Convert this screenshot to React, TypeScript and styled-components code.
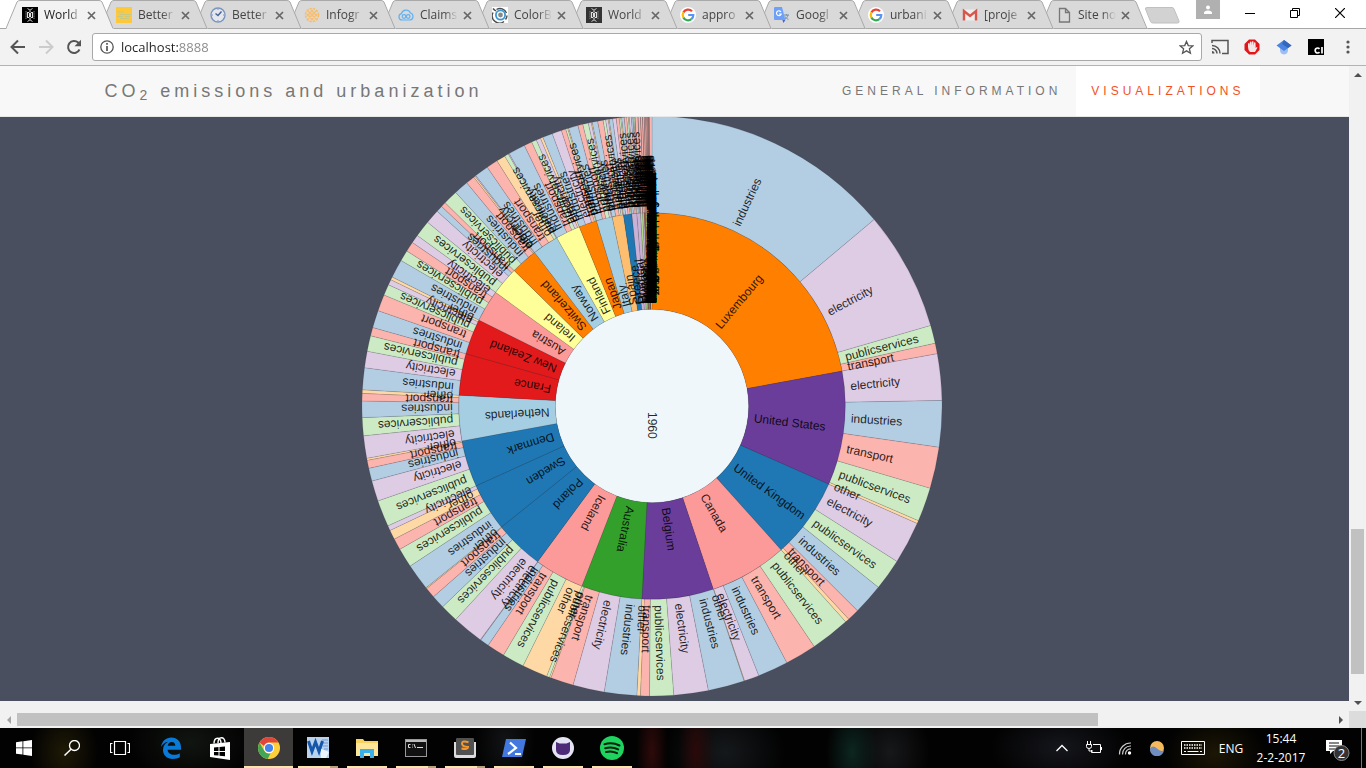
import React from 'react';
import styled, { createGlobalStyle } from 'styled-components';

const GlobalStyle = createGlobalStyle`
  * { box-sizing: border-box; }
  html, body { margin: 0; padding: 0; }
  body { font-family: "Liberation Sans", Arial, sans-serif; overflow: hidden; }
  button { font: inherit; color: inherit; border: 0; padding: 0; background: none; }
  a { text-decoration: none; color: inherit; }
  svg { display: block; flex: none; }
`;

const UI_FONT = '"Open Sans", "Noto Sans", sans-serif';

/* ---------- window frame ---------- */

const Screen = styled.div`
  display: flex;
  flex-direction: column;
  height: 100vh;
  background: #f1f1f1;
`;

const TabStrip = styled.header`
  display: flex;
  flex: none;
  height: 29px;
  padding: 0 4px 0 6px;
  background: linear-gradient(#fff 28px, #a6a6a6 28px);
  font-family: ${UI_FONT};
`;

const TabItem = styled.div<{ $order: number; $active?: boolean }>`
  position: relative;
  z-index: ${(p) => p.$order};
  display: flex;
  flex: none;
  align-items: center;
  width: 94px;
  height: 29px;
  padding: 1px 1px 0 16px;
  color: ${(p) => (p.$active ? '#222' : '#444')};
`;

const TabShape = styled.svg`
  position: absolute;
  left: 0;
  top: 0;
  z-index: -1;
`;

const TabLabel = styled.button`
  display: flex;
  flex: 1;
  align-items: center;
  gap: 6px;
  min-width: 0;
  font-size: 12px;
  line-height: 16px;
`;

const TabTitle = styled.span`
  flex: 1;
  white-space: nowrap;
  text-align: left;
  mask-image: linear-gradient(90deg, #000 24px, transparent 38px);
`;

const TabClose = styled.button`
  display: flex;
  justify-content: center;
  width: 16px;
`;

const NewTab = styled.button`
  margin: 6px 0 0 10px;
  height: 18px;
`;

const WindowControls = styled.div`
  display: flex;
  flex: 1;
  justify-content: flex-end;
`;

const UserBadge = styled.button`
  display: flex;
  justify-content: center;
  align-items: center;
  width: 24px;
  height: 19px;
  margin-right: 7px;
  background: #b0b0b0;
`;

const WindowButton = styled.button`
  display: flex;
  justify-content: center;
  align-items: center;
  width: 45px;
  height: 26px;
`;

const Toolbar = styled.div`
  display: flex;
  flex: none;
  align-items: center;
  height: 37px;
  padding: 0 2px 0 9px;
  background: #f2f2f2;
  border-bottom: 1px solid #b3b3b3;
`;

const ToolButton = styled.button<{ $width?: number }>`
  display: flex;
  flex: none;
  justify-content: center;
  align-items: center;
  width: ${(p) => p.$width ?? 32}px;
  height: 28px;
`;

const AddressBar = styled.div`
  display: flex;
  flex: 1;
  align-items: center;
  height: 28px;
  margin: 0 2px 0 9px;
  padding: 0 7px;
  gap: 7px;
  background: #fff;
  border: 1px solid #a9a9a9;
  border-radius: 3px;
`;

const AddressInput = styled.input`
  flex: 1;
  min-width: 0;
  height: 24px;
  padding: 0;
  border: 0;
  outline: 0;
  font: 13px/24px ${UI_FONT};
  color: transparent;
  background: linear-gradient(90deg, #222 58px, #888 58px);
  background-clip: text;
`;

/* ---------- page ---------- */

const Viewport = styled.div`
  display: grid;
  flex: 1;
  min-height: 0;
  grid-template: minmax(0, 1fr) 17px / minmax(0, 1fr) 17px;
`;

const Page = styled.main`
  display: flex;
  flex-direction: column;
  overflow: hidden;
  padding-bottom: 10px;
  background: #f1f1f1;
`;

const SiteNav = styled.nav`
  flex: none;
  background: #f8f8f8;
  border-bottom: 1px solid #e7e7e7;
`;

const NavInner = styled.div`
  display: flex;
  justify-content: space-between;
  max-width: 1170px;
  margin: 0 auto;
  height: 50px;
  padding-left: 15px;
  letter-spacing: 4px;
  line-height: 20px;
`;

const Brand = styled.a`
  padding: 15px 0;
  font-size: 18px;
  color: #777;
  white-space: nowrap;
  sub { font-size: 14px; line-height: 0; vertical-align: -3px; }
`;

const NavLinks = styled.div`
  display: flex;
`;

const NavLink = styled.a<{ $active?: boolean }>`
  padding: 15px;
  font-size: 12px;
  text-transform: uppercase;
  white-space: nowrap;
  color: ${(p) => (p.$active ? '#f4511e' : '#777')};
  background: ${(p) => (p.$active ? '#fff' : 'transparent')};
`;

const ChartSection = styled.section`
  display: flex;
  flex: 1;
  justify-content: center;
  min-height: 0;
  overflow: hidden;
  padding-right: 45px;
  background: #494f5e;
`;

const SunburstSvg = styled.svg`
  flex: none;
  margin-top: -1px;
  font-size: 12px;
  path { stroke: #000; stroke-opacity: 0.2; stroke-width: 0.5px; }
  text { fill-opacity: 0.85; }
`;

const VerticalBar = styled.div`
  display: flex;
  flex-direction: column;
  align-items: center;
  background: #f1f1f1;
`;

const HorizontalBar = styled.div`
  display: flex;
  align-items: center;
  background: #f1f1f1;
`;

const BarArrow = styled.button`
  display: flex;
  flex: none;
  justify-content: center;
  align-items: center;
  width: 17px;
  height: 17px;
`;

const Track = styled.div<{ $vertical?: boolean }>`
  display: flex;
  flex: 1;
  flex-direction: ${(p) => (p.$vertical ? 'column' : 'row')};
`;

const TrackGap = styled.div<{ $grow: number }>`
  flex: ${(p) => p.$grow} 1 0;
`;

const Thumb = styled.div<{ $grow: number }>`
  flex: ${(p) => p.$grow} 1 0;
  min-width: 13px;
  min-height: 13px;
  background: #c1c1c1;
`;

const Corner = styled.div`
  background: #dcdcdc;
`;

/* ---------- task bar ---------- */

const Taskbar = styled.footer`
  display: flex;
  flex: none;
  justify-content: space-between;
  height: 40px;
  color: #fff;
  font-family: ${UI_FONT};
  background:
    radial-gradient(ellipse 34px 44px at 64px 24px, #1f1a06, transparent),
    radial-gradient(ellipse 60px 40px at 190px 14px, #111510, transparent),
    radial-gradient(ellipse 30px 50px at 505px 14px, #121315, transparent),
    radial-gradient(ellipse 16px 60px at 652px 24px, #2e0a0a, transparent),
    radial-gradient(ellipse 18px 60px at 696px 24px, #2a0909, transparent),
    radial-gradient(ellipse 60px 50px at 725px 24px, #15181b, transparent),
    radial-gradient(ellipse 26px 50px at 852px 24px, #0d2620, transparent),
    radial-gradient(ellipse 40px 50px at 890px 24px, #17181a, transparent),
    radial-gradient(ellipse 70px 40px at 1060px 20px, #15161c, transparent),
    radial-gradient(ellipse 50px 40px at 1215px 26px, #1c1605, transparent),
    #020202;
`;

const AppRow = styled.div`
  display: flex;
`;

const AppButton = styled.button<{ $state?: 'active' | 'open' | 'stacked'; $wide?: boolean }>`
  display: flex;
  justify-content: center;
  align-items: center;
  width: ${(p) => (p.$wide ? 49 : 48)}px;
  height: 40px;
  background: ${(p) => {
    if (p.$state === 'active') return 'linear-gradient(#3d3a3a 38px, #fbe3ab 38px)';
    if (p.$state === 'open') return 'linear-gradient(#fbe3ab, #fbe3ab) 50% 100% / 40px 2px no-repeat';
    if (p.$state === 'stacked')
      return 'linear-gradient(90deg, #fbe3ab 32px, #b7a37b 32px) 50% 100% / 40px 2px no-repeat';
    return 'none';
  }};
`;

const AppGap = styled.div`
  width: 2px;
`;

const Tray = styled.div`
  display: flex;
  align-items: center;
`;

const TrayButton = styled.button<{ $width: number }>`
  display: flex;
  justify-content: center;
  align-items: center;
  width: ${(p) => p.$width}px;
  height: 40px;
  font-size: 12px;
`;

const Clock = styled.button`
  width: 66px;
  font-size: 12px;
  line-height: 19px;
  text-align: center;
`;

const ShowDesktop = styled.button`
  width: 5px;
  height: 40px;
  border-left: 1px solid #777;
`;

/* ---------- chart data ---------- */

type Sector = 'industries' | 'electricity' | 'publicservices' | 'transport' | 'other';
type Country = { name: string; color: string; end: number; parts: [Sector, number][] };

const SECTOR_COLORS: Record<Sector, string> = {
  industries: '#b3cde3',
  electricity: '#decbe4',
  publicservices: '#ccebc5',
  transport: '#fbb4ae',
  other: '#fed9a6',
};

const KEYS: Record<string, Sector> = {
  i: 'industries',
  e: 'electricity',
  p: 'publicservices',
  t: 'transport',
  o: 'other',
};

/* Each sector entry is a key letter followed by the angle (degrees) at which it ends. */
const country = (name: string, color: string, end: number, spec: string): Country => ({
  name,
  color,
  end,
  parts: spec.split(' ').map((s) => [KEYS[s[0]], Number(s.slice(1))]),
});

const COUNTRIES: Country[] = [
  country('Luxembourg', '#ff7f00', 79.6, 'i50 e73.9 p77.5 t79.6'),
  country('United States', '#6a3d9a', 113.9, 'e88.9 i98.2 t106.5 p113.3 o113.9'),
  country('United Kingdom', '#1f78b4', 138.1, 'e122.4 p128.7 i134.9 t137.3 o138.1'),
  country('Canada', '#fb9a99', 161.5, 'p146 t152.3 i158.4 e161.4 o161.5'),
  country('Belgium', '#6a3d9a', 183, 'i168.8 e175.7 p180.5 t182.3 o183'),
  country('Australia', '#33a02c', 201.3, 'i189.5 e195.8 t200.4 o200.7 p201.3'),
  country('Iceland', '#fb9a99', 216.3, 'o206.4 p210.8 t214.4 i216.2 e216.3'),
  country('Poland', '#1f78b4', 231.2, 'e222.6 p226.2 i228.9 t231 o231.2'),
  country('Sweden', '#1f78b4', 245.6, 'i236.5 p240.4 t242.7 o244.6 e245.6'),
  country('Denmark', '#1f78b4', 259.6, 'p250.9 e255 i257.6 t259.2 o259.6'),
  country('Netherlands', '#a6cee3', 273.2, 'e264.1 p267.7 i271 t272.5 o273.2'),
  country('France', '#e31a1c', 285.7, 'i277.6 e280.9 p284 t285.7'),
  country('New Zealand', '#e31a1c', 296.4, 'i289.2 t292.5 p294.7 e295.8 o296.4'),
  country('Austria', '#fb9a99', 306, 'i300.1 p302.3 t304.3 e306'),
  country('Ireland', '#ffff99', 314.5, 'p309.3 e312.2 i313.5 t314.5'),
  country('Switzerland', '#ff7f00', 322.6, 'p317.4 i320.3 t322.1 o322.4 e322.6'),
  country('Norway', '#a6cee3', 330.5, 'i325.4 t327.7 o329.5 p330.3 e330.5'),
  country('Finland', '#ffff99', 337.9, 'i333.9 t335.5 p336.5 e337.4 o337.9'),
  country('Japan', '#ff7f00', 343.3, 'i339.9 e341.8 t342.7 p343.1 o343.3'),
  country('Italy', '#a6cee3', 348.1, 'i345.2 t346.2 p347.3 e347.9 o348.1'),
  country('Spain', '#fdbf6f', 351.5, 'i349.2 t350.3 p350.8 e351.3 o351.5'),
  country('Greece', '#1f78b4', 354, 'i352.2 e352.9 t353.5 p353.8 o354'),
  country('Portugal', '#cab2d6', 355.5, 'i354.5 t355 p355.3 o355.5'),
  country('Hungary', '#cab2d6', 356.6, 'e355.9 i356.2 t356.4 p356.6'),
];

/* Countries whose share is too small to read; each takes a fixed part of what is left. */
const SMALL_COUNTRIES = ['Turkey', 'Mexico', 'Israel', 'Chile', 'Czech Rep.', 'Estonia', 'Slovenia', 'Uruguay', 'Jamaica', 'Panama'];

/* Countries with no reported emissions: labels only, at the end of the circle. */
const EMPTY_COUNTRIES = [
  'Central African Republic', 'Bosnia and Herzegovina', 'Egypt, Arab Republic of', 'Congo, Dem. Republic of',
  'Korea, Dem. Republic of', 'Yemen, Arab Republic of', 'Macedonia, Republic of', 'Sao Tome and Principe',
  'Micronesia, Fed. States', 'Tanzania, United Rep. of', 'Moldova, Republic of the', 'Gambia, Republic of The',
  'Northern Mariana Isles', 'British Virgin Islands', 'Saint Kitts and Nevis', 'Hong Kong SAR, China',
  'Trinidad and Tobago', 'Papua New Guinea', 'Equatorial Guinea', 'Antigua and Barbuda', 'Dominican Republic',
  'United Arab Emirates', 'Russian Federation', 'Netherlands Antilles', 'Marshall Islands', 'Solomon Islands',
  'Brunei Darussalam', 'Kyrgyz Republic', 'French Polynesia', 'Turkmenistan', 'Saudi Arabia', 'Sierra Leone',
  'Madagascar', 'Mozambique', 'Philippines', 'Uzbekistan', 'Afghanistan', 'Burkina Faso', 'Guinea-Bissau',
  'Liechtenstein', 'Syrian Arab Republic', 'Slovak Republic', 'Puerto Rico', 'New Caledonia', 'South Africa',
];

const SMALL_COLORS = ['#b2df8a', '#cab2d6', '#b15928', '#a6cee3', '#fdbf6f'];

function withSmallCountries(): Country[] {
  const all = [...COUNTRIES];
  let start = 356.6;
  SMALL_COUNTRIES.forEach((name, i) => {
    const last = i === SMALL_COUNTRIES.length - 1;
    const end = last ? 360 : start + (360 - start) * 0.18;
    all.push({
      name,
      color: SMALL_COLORS[i % SMALL_COLORS.length],
      end,
      parts: [
        ['industries', start + (end - start) * 0.1],
        ['transport', end],
      ],
    });
    start = end;
  });
  return all;
}

const RADIUS = 290;
const RING = RADIUS / 3;
const CX = 290;
const CY = 290;

const point = (angle: number, r: number) => {
  const a = ((angle - 90) * Math.PI) / 180;
  return `${(CX + r * Math.cos(a)).toFixed(2)},${(CY + r * Math.sin(a)).toFixed(2)}`;
};

const arcPath = (a0: number, a1: number, r0: number, r1: number) =>
  `M${point(a0, r1)} A${r1},${r1} 0 0 1 ${point(a1, r1)} L${point(a1, r0)} A${r0},${r0} 0 0 0 ${point(a0, r0)} Z`;

type Arc = { key: string; label: string; color: string; a0: number; a1: number; level: number };

function buildArcs(): Arc[] {
  const arcs: Arc[] = [];
  let start = 0;
  withSmallCountries().forEach((c) => {
    arcs.push({ key: c.name, label: c.name, color: c.color, a0: start, a1: c.end, level: 1 });
    let s = start;
    c.parts.forEach(([sector, end]) => {
      arcs.push({ key: c.name + sector, label: sector, color: SECTOR_COLORS[sector], a0: s, a1: end, level: 2 });
      s = end;
    });
    start = c.end;
  });
  return arcs;
}

const ARCS = buildArcs();

const LABELS: Arc[] = [
  ...ARCS,
  ...EMPTY_COUNTRIES.map((name) => ({ key: name, label: name, color: 'none', a0: 360, a1: 360, level: 1 })),
];

function Sunburst() {
  return (
    <SunburstSvg width="580" height="580" viewBox="0 0 580 580" role="img" aria-label="Emissions per country in 1960">
      <circle cx={CX} cy={CY} r={RING} fill="#eff7fb" />
      {ARCS.map((a) => (
        <path key={a.key} d={arcPath(a.a0, a.a1, a.level * RING, (a.level + 1) * RING)} fill={a.color} />
      ))}
      <text transform={`rotate(90 ${CX} ${CY})`} x={CX + 6} y={CY} dy=".35em">
        1960
      </text>
      {LABELS.map((a) => (
        <text
          key={a.key}
          transform={`rotate(${((a.a0 + a.a1) / 2 - 90).toFixed(2)} ${CX} ${CY})`}
          x={CX + a.level * RING + 6}
          y={CY}
          dy=".35em"
        >
          {a.label}
        </text>
      ))}
    </SunburstSvg>
  );
}

/* ---------- icons ---------- */

const Icon = ({ size = 16, box = 16, children }: { size?: number; box?: number; children: React.ReactNode }) => (
  <svg width={size} height={size} viewBox={`0 0 ${box} ${box}`} fill="none" aria-hidden="true">
    {children}
  </svg>
);

const WorldFavicon = ({ dim }: { dim?: boolean }) => (
  <Icon>
    <rect width="16" height="16" fill={dim ? '#333' : '#000'} />
    <path d="M5.500 1.500 8 3.200l2.500-1.700M5.500 14.500 8 12.800l2.500 1.700" stroke="#ccc" />
    <path d="M7 5.500H5.500v5H7M9 5.500h1.500v5H9M7.500 6.500h1v3h-1ZM8 3.500v2M8 10.500v2" stroke="#ddd" strokeWidth="1.100" />
    <path d="M4 4v8M12 4v8" stroke="#888" strokeDasharray="1.500 .7" />
  </Icon>
);

const YellowFavicon = () => (
  <Icon>
    <rect width="16" height="16" fill="#fdc93a" />
    <path d="M1 5h7M3 7.500h12M1 9.500h6M9 9.500h5M4 11.500h9" stroke="#c9c784" strokeWidth="1.200" />
  </Icon>
);

const ClockFavicon = () => (
  <Icon>
    <circle cx="8" cy="8" r="7" fill="#e5e7ec" stroke="#7a94bf" strokeWidth="1.400" />
    <path d="M5.500 6.500 8 8.500l3.500-4" stroke="#44659c" strokeWidth="1.500" />
    <path d="M8 2v1M8 13v1M2 8h1M13 8h1" stroke="#7a94bf" />
  </Icon>
);

const LatticeFavicon = () => (
  <Icon>
    <circle cx="8" cy="8" r="6.500" stroke="#f8bd69" strokeWidth="1.600" strokeDasharray="2.400 1" />
    <path d="M3 7l6 6M4 4l8 8M7 3l6 6M3 9l6-6M4 12l8-8M7 13l6-6" stroke="#f8bd69" strokeWidth="1.400" />
  </Icon>
);

const CloudFavicon = () => (
  <Icon>
    <path d="M4 13a3.200 3.200 0 0 1-.6-6.300A4.800 4.800 0 0 1 12.400 6 3.600 3.600 0 0 1 12 13Z" stroke="#62b1f2" strokeWidth="1.200" />
    <circle cx="6" cy="9.500" r="1.800" stroke="#62b1f2" strokeWidth="1.200" />
    <circle cx="10.200" cy="9.500" r="1.800" stroke="#62b1f2" strokeWidth="1.200" />
  </Icon>
);

const ColorFavicon = () => (
  <Icon>
    <rect width="16" height="16" fill="#fff" />
    <path d="M1 1.500A9 9 0 0 0 4 4M1 5.500A7.300 7.300 0 0 0 12 14.500M4.500 2.500A7 7 0 0 1 14.500 6M15 8.500a7 7 0 0 1-1.500 4" stroke="#4d4d4d" strokeWidth="1.400" />
    <circle cx="8.500" cy="8" r="4.600" stroke="#3e97cf" strokeWidth="1.800" />
    <circle cx="8.500" cy="8" r="2.400" fill="#888" />
  </Icon>
);

const GoogleFavicon = () => (
  <Icon>
    <circle cx="8" cy="8" r="8" fill="#fff" />
    <path d="M12 4.200A5.400 5.400 0 0 0 3.400 5.400" stroke="#ea4335" strokeWidth="2.200" />
    <path d="M3.400 5.400a5.400 5.400 0 0 0 0 5.200" stroke="#fbbc05" strokeWidth="2.200" />
    <path d="M3.400 10.600a5.400 5.400 0 0 0 8 1.600" stroke="#34a853" strokeWidth="2.200" />
    <path d="M11.400 12.200A5.400 5.400 0 0 0 13.300 8H8.200" stroke="#5b93f5" strokeWidth="2.200" />
  </Icon>
);

const TranslateFavicon = () => (
  <Icon>
    <path d="M8 3h6.500a1 1 0 0 1 1 1v10a1 1 0 0 1-1 1H10Z" fill="#d3d8dd" />
    <path d="M10 8h5M12.500 7v1.500M14 8c-.4 2-1.600 3.400-3.200 4.200M11 9.400c.6 1.400 2 2.400 3.400 3" stroke="#7890a0" />
    <path d="M1 0h7l3.400 13H1a1 1 0 0 1-1-1V1a1 1 0 0 1 1-1Z" fill="#6fa0f5" />
    <path d="M8.400 13h3L9.400 16Z" fill="#4866c8" />
    <path d="M7 5A2.400 2.400 0 1 0 7.200 7H5" stroke="#fff" strokeWidth="1.100" />
  </Icon>
);

const MailFavicon = () => (
  <Icon>
    <rect x="1" y="2.500" width="14" height="11" fill="#eee" />
    <path d="M2 13.500V4l6 5 6-5v9.500" stroke="#d9564a" strokeWidth="2.400" />
  </Icon>
);

const PageFavicon = () => (
  <Icon>
    <path d="M3.500 1.500h6l4 4v9.500h-10ZM9.500 1.500v4h4" stroke="#777" strokeWidth="1.300" />
  </Icon>
);

const CloseGlyph = () => (
  <Icon size={9} box={9}>
    <path d="M1 1l7 7M8 1L1 8" stroke="#666" strokeWidth="1.700" />
  </Icon>
);

const TABS: { title: string; icon: React.ReactNode }[] = [
  { title: 'World', icon: <WorldFavicon /> },
  { title: 'Better', icon: <YellowFavicon /> },
  { title: 'Better', icon: <ClockFavicon /> },
  { title: 'Infogr', icon: <LatticeFavicon /> },
  { title: 'Claims', icon: <CloudFavicon /> },
  { title: 'ColorB', icon: <ColorFavicon /> },
  { title: 'World', icon: <WorldFavicon dim /> },
  { title: 'appro', icon: <GoogleFavicon /> },
  { title: 'Googl', icon: <TranslateFavicon /> },
  { title: 'urbani', icon: <GoogleFavicon /> },
  { title: '[proje', icon: <MailFavicon /> },
  { title: 'Site no', icon: <PageFavicon /> },
];

function Tabs() {
  return (
    <TabStrip>
      {TABS.map((tab, i) => (
        <TabItem key={i} $order={20 - i} $active={i === 0}>
          <TabShape width="108" height="29" viewBox="0 0 108 29" aria-hidden="true">
            <path d="M0 29 L1 27 L11 2 Q12 .5 14 .5 H93 Q95 .5 96 2 L106 27 L108 29 Z" fill={i === 0 ? '#f2f2f2' : '#d9d9d9'} />
            <path
              d={i === 0 ? 'M0 28.500 L11 2 Q12 .5 14 .5 H93 Q95 .5 96 2 L107 28.500' : 'M0 28.500 L11 2 Q12 .5 14 .5 H93 Q95 .5 96 2 L107 28.500 H0'}
              fill="none"
              stroke="#a9a9a9"
            />
          </TabShape>
          <TabLabel type="button">
            {tab.icon}
            <TabTitle>{tab.title}</TabTitle>
          </TabLabel>
          <TabClose type="button" aria-label="Close tab">
            <CloseGlyph />
          </TabClose>
        </TabItem>
      ))}
      <NewTab type="button" aria-label="New tab">
        <svg width="36" height="18" viewBox="0 0 36 18">
          <path d="M3 1.500h25q1.500 0 2 1.500l5 12q.5 2-1.500 2H9q-2 0-2.500-1.500L1.500 3Q1 1.500 3 1.500Z" fill="#d2d2d2" stroke="#c0c0c0" />
        </svg>
      </NewTab>
      <WindowControls>
        <UserBadge type="button" aria-label="User">
          <Icon size={10} box={10}>
            <circle cx="5" cy="2.500" r="2" fill="#fff" />
            <path d="M1 9V8q0-2.500 4-2.500T9 8v1Z" fill="#fff" />
          </Icon>
        </UserBadge>
        <WindowButton type="button" aria-label="Minimize">
          <Icon size={10} box={10}><path d="M0 5.500h10" stroke="#000" /></Icon>
        </WindowButton>
        <WindowButton type="button" aria-label="Restore">
          <Icon size={10} box={10}><path d="M.5 2.500h7v7h-7ZM2.500 2.500v-2h7v7h-2" stroke="#000" /></Icon>
        </WindowButton>
        <WindowButton type="button" aria-label="Close">
          <Icon size={10} box={10}><path d="M0 0l10 10M10 0L0 10" stroke="#000" strokeWidth="1.200" /></Icon>
        </WindowButton>
      </WindowControls>
    </TabStrip>
  );
}

function BrowserToolbar() {
  return (
    <Toolbar>
      <ToolButton type="button" aria-label="Back" $width={18}>
        <Icon><path d="M15 8H2M8 1.500 1.500 8 8 14.500" stroke="#555" strokeWidth="2" /></Icon>
      </ToolButton>
      <ToolButton type="button" aria-label="Forward" $width={38}>
        <Icon><path d="M1 8h13M8 1.500 14.500 8 8 14.500" stroke="#ccc" strokeWidth="2" /></Icon>
      </ToolButton>
      <ToolButton type="button" aria-label="Reload" $width={18}>
        <Icon>
          <path d="M13.500 10.500A6 6 0 1 1 12.200 3.600L13.500 5" stroke="#555" strokeWidth="2" />
          <path d="M15 .8v6.500H8.500Z" fill="#555" />
        </Icon>
      </ToolButton>
      <AddressBar>
        <Icon size={14} box={14}>
          <circle cx="7" cy="7" r="6.200" stroke="#555" strokeWidth="1.300" />
          <path d="M7 6v5M7 3v1.700" stroke="#555" strokeWidth="1.700" />
        </Icon>
        <AddressInput aria-label="Address" defaultValue="localhost:8888" />
        <Icon size={15} box={16}>
          <path d="M8 1.500l1.900 4.400 4.800.4-3.600 3.100 1.100 4.700L8 11.600l-4.200 2.500 1.100-4.700L1.300 6.300l4.800-.4Z" stroke="#555" strokeWidth="1.400" />
        </Icon>
      </AddressBar>
      <ToolButton type="button" aria-label="Cast">
        <Icon size={18} box={18}>
          <path d="M1 5V2.500h16v13h-6M1 7.500a8 8 0 0 1 8 8M1 10.500a5 5 0 0 1 5 5" stroke="#555" strokeWidth="1.500" />
          <path d="M1 13a2.500 2.500 0 0 1 2.500 2.500H1Z" fill="#555" />
        </Icon>
      </ToolButton>
      <ToolButton type="button" aria-label="Blocker">
        <Icon>
          <path d="M5 .5h6L15.500 5v6L11 15.500H5L.5 11V5Z" fill="#e2161a" />
          <path d="M4 8V4.500q.8-.8 1.500 0V7l.4-4q.8-.9 1.600 0V6.500L8 2.500q.8-.7 1.500 0V7l.6-3.500q.9-.6 1.400.3L11.700 9l1-1q1 .1.500 1L11 13H6Q4 11 4 8Z" fill="#f4e6e4" />
        </Icon>
      </ToolButton>
      <ToolButton type="button" aria-label="Scholar">
        <Icon>
          <path d="M4 7h8v4q0 4-4 4.500Q4 15 4 11Z" fill="#9dbdf5" />
          <path d="M8 1l7.500 5.500L8 12 .5 6.500Z" fill="#4c84e0" />
          <path d="M8 1l7.500 5.500L12 9 6 5Z" fill="#3367bd" />
        </Icon>
      </ToolButton>
      <ToolButton type="button" aria-label="Citation">
        <Icon>
          <rect width="16" height="16" fill="#000" />
          <path d="M11.500 9.800A2.500 2.500 0 1 0 11.500 13.200M14 8v6.500" stroke="#fff" strokeWidth="1.700" />
        </Icon>
      </ToolButton>
      <ToolButton type="button" aria-label="Menu">
        <Icon>
          <circle cx="8" cy="3" r="1.600" fill="#555" /><circle cx="8" cy="8" r="1.600" fill="#555" /><circle cx="8" cy="13" r="1.600" fill="#555" />
        </Icon>
      </ToolButton>
    </Toolbar>
  );
}

const Arrow = ({ d, color = '#505050' }: { d: string; color?: string }) => (
  <Icon size={8} box={8}><path d={d} fill={color} /></Icon>
);

/* ---------- task bar icons ---------- */

const StartIcon = () => (
  <Icon><path d="M0 2.200 6.500 1.300v6.200H0ZM7.300 1.200 16 0v7.500H7.300ZM0 8.300h6.500v6.300L0 13.700ZM7.300 8.300H16V16l-8.700-1.200Z" fill="#fff" /></Icon>
);
const SearchIcon = () => (
  <Icon><circle cx="10.500" cy="5.500" r="5" stroke="#fff" strokeWidth="1.300" /><path d="M7 9.200.5 15.500" stroke="#fff" strokeWidth="1.500" /></Icon>
);
const TaskViewIcon = () => (
  <Icon size={20} box={20}><path d="M4.500 3.500h11v13h-11ZM2.500 5.500h-2v9h2M17.500 5.500h2v9h-2" stroke="#fff" strokeWidth="1.200" /></Icon>
);
const EdgeIcon = () => (
  <Icon size={22} box={22}>
    <path d="M1 10C2 4 6 .5 11.300.5 17.500.5 21 5 21 10v2.800H7.600c.2 3.400 3 5 6.400 5 2.400 0 4.200-.6 5.800-1.600v4c-2 1.200-4.400 1.700-7 1.700C6.800 21.900 3 18 3 13c0-4 2-6.600 5-8.200C5 5.200 2.500 7 1 10Zm6.700-1.200h7.600C15.300 6.600 14 5 11.700 5 9.600 5 8.100 6.600 7.700 8.800Z" fill="#0a7ad8" />
  </Icon>
);
const StoreIcon = () => (
  <Icon size={24} box={24}>
    <path d="M2 8 22 6v18L2 21Z" fill="#fff" />
    <path d="M6 7.500C6 .5 13 .5 13 7M10 7C10 0 17 0 17 6.500" stroke="#fff" strokeWidth="1.400" />
    <path d="M6 11.500l4.500-.4v3.900H6ZM11.500 11l5.500-.5V15h-5.500ZM6 16h4.500v3.600L6 19.200ZM11.500 16H17v4.200l-5.500-.5Z" fill="#000" />
  </Icon>
);
const ChromeIcon = () => (
  <Icon size={22} box={22}>
    <circle cx="11" cy="11" r="11" fill="#fdd03b" />
    <path d="M1.500 5.500A11 11 0 0 1 20.500 5.500H11A5.500 5.500 0 0 0 6 9Z" fill="#e0463c" />
    <path d="M1.500 5.500 6.200 13.700A5.500 5.500 0 0 0 12.500 16.300L9.700 21.900A11 11 0 0 1 1.500 5.500Z" fill="#41a657" />
    <circle cx="11" cy="11" r="5.200" fill="#fff" /><circle cx="11" cy="11" r="4.100" fill="#4484ee" />
  </Icon>
);
const WordIcon = () => (
  <Icon size={22} box={22}>
    <rect x="0" y="0" width="22" height="21" fill="#b9d2ee" />
    <path d="M15 3h6M16 6h5M16 9h5M17 12h4" stroke="#6f9cd0" />
    <path d="M1.500 4 5 14.500 8.500 5 12 14.500 15.500 4" stroke="#1557a8" strokeWidth="3" />
    <path d="M14 12l8 3-3 6h-5Z" fill="#eef4fc" />
  </Icon>
);
const FolderIcon = () => (
  <Icon size={22} box={22}>
    <path d="M0 2h7l1.500 2H22v15H0Z" fill="#f7d25c" /><path d="M0 6h22v13H0Z" fill="#fde59a" />
    <path d="M4 21v-9h14v9h-4v-5H8v5Z" fill="#39b0ea" />
  </Icon>
);
const ConsoleIcon = () => (
  <Icon size={22} box={22}>
    <rect x=".5" y="2.500" width="21" height="17" fill="#111" stroke="#999" /><path d="M1 4h20" stroke="#bbb" strokeWidth="2" />
    <path d="M5.500 7.500H3.500v3h2M7.500 7.500v.8M7.500 9.700v.8M9 7l1.500 4M12 10.500h6" stroke="#ddd" />
  </Icon>
);
const SublimeIcon = () => (
  <Icon size={22} box={22}>
    <path d="M0 5h22v14q0 2-2 2H2q-2 0-2-2Z" fill="#ddd" /><rect x="2" y="1" width="18" height="17" rx="1" fill="#515151" />
    <path d="M14.500 5.300Q8 3.300 8 6.500T14 10Q14 13 7.500 11.500" stroke="#f39831" strokeWidth="2" />
  </Icon>
);
const ShellIcon = () => (
  <Icon size={24} box={24}>
    <path d="M4 3h20l-4 18H0Z" fill="#4379df" /><path d="M8 6.500l6 5.500-8 6M13 18h6" stroke="#fff" strokeWidth="2.200" />
  </Icon>
);
const CatIcon = () => (
  <Icon size={22} box={22}>
    <circle cx="11" cy="11" r="11" fill="#e4e4f4" />
    <path d="M4 5l3.500 1.500h7L18 5v8q0 5-7 5t-7-5Z" fill="#4d2b78" />
  </Icon>
);
const SpotifyIcon = () => (
  <Icon size={24} box={24}>
    <circle cx="12" cy="12" r="12" fill="#1ed35e" />
    <path d="M4.500 8.200q8-2.200 15 1.300M5.200 12.200q7-1.900 13 1.200M6 16q6-1.500 11 1.200" stroke="#08210f" strokeWidth="2" strokeLinecap="round" />
  </Icon>
);

const APPS: { label: string; icon: React.ReactNode; state?: 'active' | 'open' | 'stacked' }[] = [
  { label: 'Edge', icon: <EdgeIcon /> },
  { label: 'Store', icon: <StoreIcon /> },
  { label: 'Chrome', icon: <ChromeIcon />, state: 'active' },
  { label: 'Word', icon: <WordIcon />, state: 'stacked' },
  { label: 'Explorer', icon: <FolderIcon />, state: 'open' },
  { label: 'Command prompt', icon: <ConsoleIcon />, state: 'stacked' },
  { label: 'Sublime', icon: <SublimeIcon />, state: 'stacked' },
  { label: 'PowerShell', icon: <ShellIcon />, state: 'open' },
  { label: 'GitHub', icon: <CatIcon />, state: 'open' },
  { label: 'Spotify', icon: <SpotifyIcon />, state: 'open' },
];

function SystemTaskbar() {
  return (
    <Taskbar>
      <AppRow>
        <AppButton type="button" aria-label="Start"><StartIcon /></AppButton>
        <AppButton type="button" aria-label="Search"><SearchIcon /></AppButton>
        <AppButton type="button" aria-label="Task view"><TaskViewIcon /></AppButton>
        <AppGap />
        {APPS.map((a) => (
          <AppButton key={a.label} type="button" aria-label={a.label} $state={a.state} $wide>
            {a.icon}
          </AppButton>
        ))}
      </AppRow>
      <Tray>
        <TrayButton type="button" aria-label="Hidden icons" $width={32}>
          <Icon size={12} box={12}><path d="M.5 9 6 3.500 11.500 9" stroke="#fff" strokeWidth="1.300" /></Icon>
        </TrayButton>
        <TrayButton type="button" aria-label="Battery" $width={32}>
          <Icon>
            <path d="M7 4.500h7.500v8h-9V10M15.500 7v3" stroke="#fff" />
            <path d="M1.500 1v3M4.500 1v3M.5 4.500h5v2q0 2-2.500 2t-2.500-2ZM3 8.500V11h4" stroke="#fff" />
          </Icon>
        </TrayButton>
        <TrayButton type="button" aria-label="Network" $width={32}>
          <Icon>
            <path d="M1.500 14.500A11 11 0 0 1 13 3M4.500 14.500A8 8 0 0 1 13 6M7.500 14.500A5 5 0 0 1 13 9" stroke="#ccc" strokeWidth="1.200" />
            <circle cx="11.500" cy="13" r="1.700" fill="#fff" />
          </Icon>
        </TrayButton>
        <TrayButton type="button" aria-label="Screen tint" $width={30}>
          <Icon>
            <circle cx="8" cy="8" r="7" fill="#f6b95c" /><path d="M1 8.500q3-4 7 0t7 1.500A7 7 0 0 1 1 8.500Z" fill="#6f8dbf" />
          </Icon>
        </TrayButton>
        <TrayButton type="button" aria-label="Keyboard" $width={42}>
          <svg width="24" height="14" viewBox="0 0 24 14" fill="none">
            <path d="M.5.5h23v13H.5Z" stroke="#fff" />
            <path d="M3 4h18M3 7h18" stroke="#fff" strokeWidth="1.300" strokeDasharray="1.500 1" /><path d="M3 10.500h2M6.500 10.500h11M19 10.500h2" stroke="#fff" />
          </svg>
        </TrayButton>
        <TrayButton type="button" $width={34}>ENG</TrayButton>
        <Clock type="button">
          <div>15:44</div>
          <div>2-2-2017</div>
        </Clock>
        <TrayButton type="button" aria-label="2 notifications" $width={47}>
          <svg width="25" height="25" viewBox="0 0 25 25" fill="none">
            <path d="M1 4h16v11H8l-3 3v-3H1Z" fill="#fff" /><path d="M4 7h10M4 10h10M4 13h7" stroke="#111" />
            <circle cx="16.500" cy="17" r="7.500" fill="#333" stroke="#888" />
            <text x="16.500" y="21.500" fontSize="13" textAnchor="middle" fill="#fff">2</text>
          </svg>
        </TrayButton>
        <ShowDesktop type="button" aria-label="Show desktop" />
      </Tray>
    </Taskbar>
  );
}

export default function App() {
  return (
    <Screen>
      <GlobalStyle />
      <Tabs />
      <BrowserToolbar />
      <Viewport>
        <Page>
          <SiteNav>
            <NavInner>
              <Brand href="#top">
                CO<sub>2</sub> emissions and urbanization
              </Brand>
              <NavLinks>
                <NavLink href="#general">General information</NavLink>
                <NavLink href="#visualizations" $active>Visualizations</NavLink>
              </NavLinks>
            </NavInner>
          </SiteNav>
          <ChartSection>
            <Sunburst />
          </ChartSection>
        </Page>
        <VerticalBar>
          <BarArrow type="button" aria-label="Scroll up"><Arrow d="M4 2l4 4H0Z" /></BarArrow>
          <Track $vertical>
            <TrackGap $grow={446} />
            <Thumb $grow={145} />
            <TrackGap $grow={20} />
          </Track>
          <BarArrow type="button" aria-label="Scroll down"><Arrow d="M4 6l4-4H0Z" /></BarArrow>
        </VerticalBar>
        <HorizontalBar>
          <BarArrow type="button" aria-label="Scroll left"><Arrow d="M2 4l4-4v8Z" color="#a3a3a3" /></BarArrow>
          <Track>
            <Thumb $grow={1081} />
            <TrackGap $grow={234} />
          </Track>
          <BarArrow type="button" aria-label="Scroll right"><Arrow d="M6 4L2 0v8Z" /></BarArrow>
        </HorizontalBar>
        <Corner />
      </Viewport>
      <SystemTaskbar />
    </Screen>
  );
}
